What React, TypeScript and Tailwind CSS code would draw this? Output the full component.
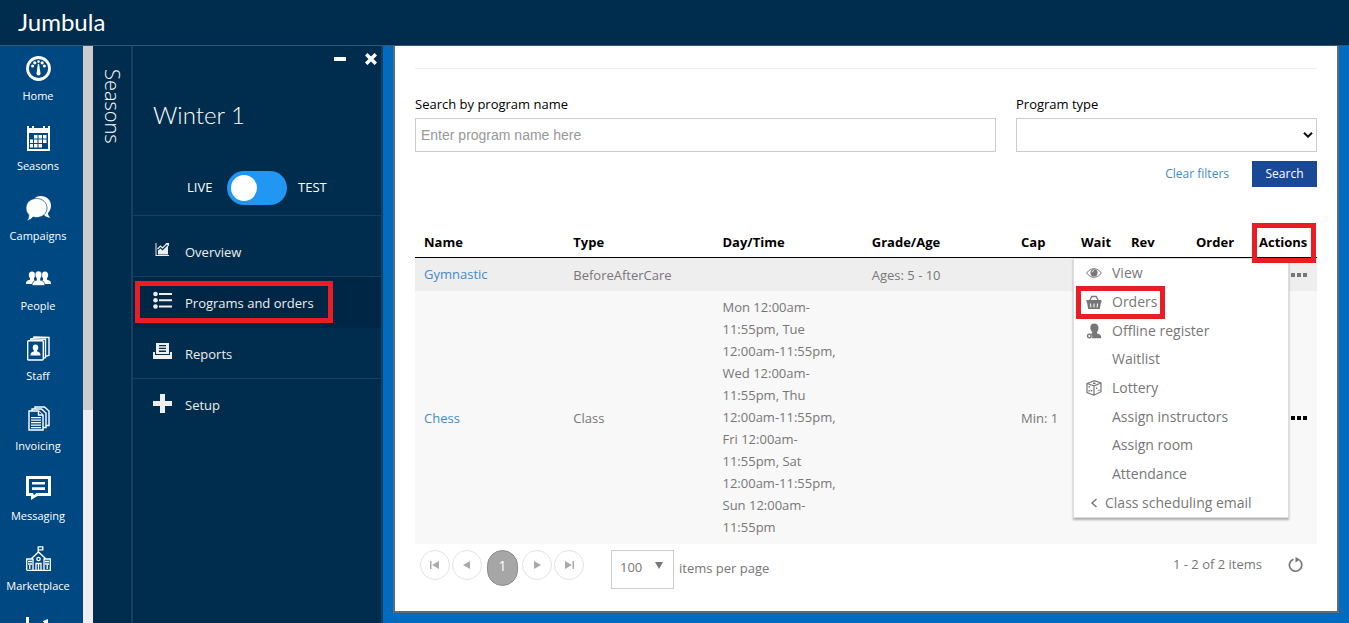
import { useState } from "react";
import type { ReactNode } from "react";

const Svg = ({
  box = "0 0 25 25",
  className = "w-[25px] h-[25px]",
  children,
}: {
  box?: string;
  className?: string;
  children: ReactNode;
}) => (
  <svg viewBox={box} className={className} fill="currentColor" aria-hidden="true">
    {children}
  </svg>
);

const HomeIcon = () => (
  <Svg>
    <circle cx="12.5" cy="12.5" r="11" fill="none" stroke="currentColor" strokeWidth="2.8" />
    <path d="M11.9 8h1.2l1.4 9.5a2 2 0 1 1-4 0z" />
    <circle cx="12.5" cy="5.6" r="1.3" />
    <circle cx="8.8" cy="6.8" r="1.6" />
    <circle cx="16.2" cy="6.8" r="1.6" />
    <circle cx="6.6" cy="10" r="1.5" />
    <circle cx="18.4" cy="10" r="1.5" />
  </Svg>
);

const CalendarIcon = () => (
  <Svg>
    <path
      fillRule="evenodd"
      d="M1 0h2v2h3V0h2v2h9V0h2v2h3V0h2v25H1zM3 7v16h19V7z"
    />
    <path d="M8 9h3.5v3.5H8zM12.5 9H16v3.5h-3.5zM17 9h3.5v3.5H17zM4 13.5h3v3.5H4zM8 13.5h3.5V17H8zM12.5 13.5H16V17h-3.5zM17 13.5h3.5V17H17zM4 18h3v3.5H4zM8 18h3.5v3.5H8zM12.5 18H16v3.5h-3.5z" />
  </Svg>
);

const CampaignsIcon = () => (
  <Svg>
    <path d="M14.5 0C20.5 0 25 4 25 9.5c0 3-1.300 5.500-3 7.500 0 2 1 3.500 2.500 4.500-2.500 0-4.500-.5-6-2L8 3C9.500 1 12 0 14.500 0z" />
    <path
      d="M10.500 2.500C16.500 2.500 21 6.500 21 12s-4.500 9.500-10.500 9.500c-1.300 0-2.500-.2-3.600-.5C5.500 23 3 24.500.8 24.500 2.300 23 3 21 2.800 18.800 1 17 0 14.700 0 12c0-5.500 4.500-9.500 10.500-9.500z"
      stroke="#004881"
      strokeWidth=".7"
    />
  </Svg>
);

const PeopleIcon = () => (
  <Svg>
    <path d="M6 5.500c2 0 3.200 1.300 3.200 3.300 0 1.500-.6 2.600-1.200 3.400v1.600l1 .5c-1.500.8-2.300 2-2.500 3.700H0c0-2.500.6-3.400 4-4.300v-1.500c-.7-.8-1.200-1.900-1.200-3.400 0-2 1.200-3.300 3.200-3.300zM19 5.500c-2 0-3.200 1.300-3.200 3.300 0 1.500.6 2.600 1.200 3.400v1.600l-1 .5c1.500.8 2.300 2 2.500 3.700H25c0-2.500-.6-3.400-4-4.300v-1.500c.7-.8 1.200-1.900 1.200-3.400 0-2-1.200-3.300-3.200-3.300z" />
    <path d="M12.500 5c2 0 3.400 1.400 3.400 3.600 0 1.700-.6 2.900-1.400 3.800v1.900c3.300.9 4.300 2 4.300 5.200H6.200c0-3.200 1-4.300 4.300-5.200v-1.900c-.8-.9-1.400-2.100-1.400-3.800C9.100 6.400 10.500 5 12.500 5z" stroke="#004881" strokeWidth=".6" />
  </Svg>
);

const StaffIcon = () => (
  <Svg>
    <g fill="none" stroke="currentColor" strokeWidth="1.400">
      <rect x="1.700" y="4.700" width="15.600" height="19.300" rx="1" />
      <path d="M4.500 4.500 5 2.700l14.500.5v18.500l-2 .3M7.500 2.500l.5-1.500 15 .5v18l-3 .6" />
    </g>
    <path d="M9.500 8.500c1.800 0 2.800 1.100 2.800 2.900 0 1.200-.5 2.200-1.100 2.900v1.300c2.400.6 3.300 1.400 3.300 3.900h-10c0-2.500.9-3.300 3.300-3.900v-1.300c-.6-.7-1.100-1.700-1.100-2.900 0-1.800 1-2.900 2.800-2.900z" />
  </Svg>
);

const InvoicingIcon = () => (
  <Svg>
    <g fill="#004881" stroke="currentColor" strokeWidth="1.400">
      <path d="M9 1h9.500L23 5v14.500H9z" />
      <path d="M6 3h9.500L20 7v14.500H6z" />
      <path d="M3 5h9.500L17 9v15H3z" />
      <path d="M12.500 5v4H17" />
    </g>
    <path d="M5 11h10v1.300H5zM5 13.500h10v1.300H5zM5 16h10v1.300H5zM5 18.500h10v1.300H5zM5 21h10v1.300H5z" />
  </Svg>
);

const MessagingIcon = () => (
  <Svg>
    <path fillRule="evenodd" d="M0 0h25v20H11.500L5 24v-4H0zM3 3v14h4l1 2.200 2.500-2.200H22V3z" />
    <path d="M6 6h13v2.600H6zM6 11.300h13v2.600H6z" />
  </Svg>
);

const MarketplaceIcon = () => (
  <Svg>
    <g fill="none" stroke="currentColor" strokeWidth="1.300">
      <path d="M12.200 6V.8h4.600v3h-4.600M7 12.500v11.800h11V12.500M5.500 12.500 12.500 6l7 6.500M.7 24.300V13H7M18 13h6.300v11.300H.7M10 24v-6.500h5V24M12.500 17.500V24" />
      <circle cx="12.500" cy="13" r="1.700" />
      <path d="M2 15.500h4M2 18h4M19 15.500h4M19 18h4M3.800 19v4M21.200 19v4" />
    </g>
  </Svg>
);

const ChartIcon = () => (
  <Svg>
    <path d="M0 1h3v21h22v3H0zM6 10h4v10H6zM12 7h4v13h-4zM17 5l5-2v17h-4V6h-1z" />
  </Svg>
);

const sideItems = [
  { label: "Home", icon: <HomeIcon /> },
  { label: "Seasons", icon: <CalendarIcon /> },
  { label: "Campaigns", icon: <CampaignsIcon /> },
  { label: "People", icon: <PeopleIcon /> },
  { label: "Staff", icon: <StaffIcon /> },
  { label: "Invoicing", icon: <InvoicingIcon /> },
  { label: "Messaging", icon: <MessagingIcon /> },
  { label: "Marketplace", icon: <MarketplaceIcon /> },
];

const seasonItems = [
  {
    label: "Overview",
    icon: (
      <Svg box="0 0 19 19" className="w-[19px] h-[19px]">
        <path d="M2.500 3h1v12H16v1H2.500zM5 10.500l2.500-2 2 2L12 8l3-3v9.500H5z" />
        <path d="m4.500 9 3-3 2 2L14 3.500" fill="none" stroke="currentColor" strokeWidth="1.200" />
        <path d="M12.500 3H16v3.500z" />
      </Svg>
    ),
  },
  {
    label: "Programs and orders",
    active: true,
    icon: (
      <Svg box="0 0 19 19" className="w-[19px] h-[19px]">
        <circle cx="2.500" cy="3" r="2.300" />
        <circle cx="2.500" cy="9.200" r="2.300" />
        <circle cx="2.500" cy="15.500" r="2.300" />
        <path d="M6 2h13v2H6zM6 8.200h13v2H6zM6 14.500h13v2H6z" />
      </Svg>
    ),
  },
  {
    label: "Reports",
    icon: (
      <Svg box="0 0 19 19" className="w-[19px] h-[19px]">
        <path fillRule="evenodd" d="M3 1h13v11H3zM6 3v1.300h7V3zM6 5.800v1.300h7V5.800zM6 8.600v1.300h7V8.600z" />
        <path d="M0 10h2v3h15v-3h2v7H0z" />
      </Svg>
    ),
  },
  {
    label: "Setup",
    icon: (
      <Svg box="0 0 19 19" className="w-[19px] h-[19px]">
        <path d="M7 0h5v7h7v5h-7v7H7v-7H0V7h7z" />
      </Svg>
    ),
  },
];

const menuItems: { label: string; icon?: ReactNode; marked?: boolean }[] = [
  {
    label: "View",
    icon: (
      <Svg box="0 0 16 16" className="w-4 h-4">
        <path d="M.7 8C4.500 2.300 11.500 2.300 15.300 8 11.500 13.700 4.500 13.700.7 8z" fill="none" stroke="currentColor" />
        <circle cx="8" cy="7.800" r="3.600" />
        <path d="M6 7.500A2 2 0 0 1 8 5.500" fill="none" stroke="#fff" strokeWidth=".8" />
      </Svg>
    ),
  },
  {
    label: "Orders",
    marked: true,
    icon: (
      <Svg box="0 0 16 16" className="w-4 h-4">
        <path d="m3.500 7 2.300-4.500h4.400L12.500 7" fill="none" stroke="currentColor" strokeWidth="1.400" />
        <path fillRule="evenodd" d="M.5 6h15v2.500H15L13.800 15H2.200L1 8.500H.5zM4 9.500l.4 4h1l-.4-4zM7.500 9.500v4h1v-4zM11 9.500l-.4 4h1l.4-4z" />
      </Svg>
    ),
  },
  {
    label: "Offline register",
    icon: (
      <Svg box="0 0 16 16" className="w-4 h-4">
        <path d="M8.200.5c2.800 0 4.300 1.700 4.300 4.500 0 1.700-.6 3-1.500 4v1.500c3 .6 4.300 1.500 4.300 4.800H5.800l.6-2.300-1.800-2.300 1.600-.4V9c-.9-1-1.900-2.300-1.900-4 0-2.800 1.300-4.500 3.900-4.500z" />
        <circle cx="3.300" cy="13" r="1.800" fill="none" stroke="currentColor" strokeWidth="1.400" />
      </Svg>
    ),
  },
  { label: "Waitlist" },
  {
    label: "Lottery",
    icon: (
      <Svg box="0 0 16 16" className="w-4 h-4">
        <path
          d="M1 3.500 8.500.7 15 3v8.700l-7 3.500-7-2.700zM1 3.500l7 2.300L15 3M8 5.800v9.400"
          fill="none"
          stroke="currentColor"
          strokeWidth="1.200"
        />
        <path d="M7 2.500h2.500V4H7zM2.500 6h1.500v1.500H2.500zM4.800 10h1.500v1.500H4.800zM2.500 10h1.500v1.500H2.500zM10 7.500h1.300V9H10zM12.300 9.500h1.300V11h-1.300z" />
      </Svg>
    ),
  },
  { label: "Assign instructors" },
  { label: "Assign room" },
  { label: "Attendance" },
];

function ActionsMenu() {
  return (
    <ul className="absolute right-[28px] top-0 z-10 grid h-[260px] w-[216px] auto-rows-fr border border-[#ddd] bg-white text-sm text-[#777] shadow-[0_2px_2px_rgba(0,0,0,0.3)]">
      {menuItems.map((item) => (
        <li key={item.label} className="relative flex">
          <button className="flex w-full items-center pl-3 text-left">
            <span className="w-[26px]">{item.icon}</span>
            {item.label}
          </button>
          {item.marked && (
            <span className="pointer-events-none absolute -top-0.5 left-0.5 h-[33px] w-[89px] border-[5px] border-[#ea1d25]" />
          )}
        </li>
      ))}
      <li className="flex">
        <button className="flex w-full items-center pl-4 text-left">
          <span className="w-[15px]">
            <svg viewBox="0 0 8 10" className="h-[10px] w-2" fill="none" stroke="currentColor" strokeWidth="1.500" aria-hidden="true">
              <path d="M6.500 1 2 5l4.500 4" />
            </svg>
          </span>
          Class scheduling email
        </button>
      </li>
    </ul>
  );
}

const Dots = () => (
  <svg viewBox="0 0 16 4" className="block h-1 w-4" fill="currentColor" aria-hidden="true">
    <path d="M0 0h4v4H0zM6 0h4v4H6zM12 0h4v4h-4z" />
  </svg>
);

const columns = ["Name", "Type", "Day/Time", "Grade/Age", "Cap", "Wait", "Rev", "Order"];

const days = ["Mon", "Tue", "Wed", "Thu", "Fri", "Sat", "Sun"];

const PagerButton = ({ label, path }: { label: string; path: string }) => (
  <button
    aria-label={label}
    className="flex h-[30px] w-[30px] items-center justify-center rounded-full border border-[#e3e3e3] text-[#aaa]"
  >
    <svg viewBox="0 0 10 10" className="h-[10px] w-[10px]" fill="currentColor">
      <path d={path} />
    </svg>
  </button>
);

export default function App() {
  const [test, setTest] = useState(false);
  const [name, setName] = useState("");

  return (
    <div className="flex h-screen flex-col overflow-hidden bg-[#006cc1] font-['Open_Sans',sans-serif] text-[13px]">
      {/* Header */}
      <header className="flex h-[46px] shrink-0 items-center border-b border-[#36566f] bg-[#002d4d] pb-0.5 pl-[18px]">
        <h1 className="font-['Lato',sans-serif] text-2xl text-white">Jumbula</h1>
      </header>

      <div className="flex min-h-0 flex-1">
        {/* Main navigation */}
        <nav className="w-[83px] shrink-0 overflow-hidden bg-[#004881] pr-[7px] text-white">
          {sideItems.map((item) => (
            <a key={item.label} href="#" className="flex h-[70px] flex-col items-center pt-[10px] text-[11px]">
              {item.icon}
              <span className="mt-1.5 leading-[18px]">{item.label}</span>
            </a>
          ))}
          <a href="#" aria-label="Reports" className="flex justify-center pt-[10px]">
            <ChartIcon />
          </a>
        </nav>
        <div className="w-[10px] shrink-0 bg-[#eee]">
          <div className="h-[63%] bg-[#ccc]" />
        </div>

        {/* Collapsed seasons tab */}
        <div className="w-10 shrink-0 border-r-2 border-[#173f60] bg-[#002d4d] pl-[5px] pt-[23px]">
          <span className="text-xl font-light text-white [writing-mode:vertical-rl]">Seasons</span>
        </div>

        {/* Season panel */}
        <aside className="w-[250px] shrink-0 border-r-2 border-[#173f60] bg-[#002d4d] text-white">
          <div className="flex h-[26px] items-center justify-end gap-[19px] pr-1">
            <button aria-label="Minimize">
              <svg viewBox="0 0 12 12" className="h-3 w-3" fill="currentColor">
                <path d="M0 4h12v4H0z" />
              </svg>
            </button>
            <button aria-label="Close">
              <svg viewBox="0 0 12 12" className="h-3 w-3" stroke="currentColor" strokeWidth="3.500">
                <path d="m1.200 1.200 9.600 9.600M10.800 1.200l-9.600 9.600" />
              </svg>
            </button>
          </div>
          <h2 className="mt-[27px] pl-5 font-['Lato',sans-serif] text-2xl font-light">Winter 1</h2>
          <label className="mt-10 flex items-center pl-[54px]">
            <span className="w-10">LIVE</span>
            <input
              type="checkbox"
              className="peer sr-only"
              checked={test}
              onChange={(e) => setTest(e.target.checked)}
            />
            <span className="flex h-[34px] w-[60px] rounded-full bg-[#2196f3] p-1 peer-checked:justify-end">
              <span className="h-[26px] w-[26px] rounded-full bg-white" />
            </span>
            <span className="ml-[11px]">TEST</span>
          </label>
          <ul className="mt-[10px] border-t border-[#173f60] pt-[10px]">
            {seasonItems.map((item) => (
              <li
                key={item.label}
                className={
                  item.active
                    ? "relative h-[51px] border-b border-[#002645] bg-[#002645]"
                    : "h-[51px] border-b border-[#173f60] last:border-0"
                }
              >
                <a href="#" className="flex h-full items-center gap-[13px] pl-5 pt-[3px] text-[#eee]">
                  <span className="pb-1.5">{item.icon}</span>
                  {item.label}
                </a>
                {item.active && (
                  <span className="pointer-events-none absolute left-0.5 top-1 h-[42px] w-[198px] border-[5px] border-[#ea1d25]" />
                )}
              </li>
            ))}
          </ul>
        </aside>

        {/* Programs */}
        <main className="mb-[10px] ml-[10px] mr-[10px] min-w-0 flex-1 border-2 border-t-0 border-[#646b70] bg-white px-5 pt-[22px]">
          <form onSubmit={(e) => e.preventDefault()} className="border-t border-[#eee] pt-[25px]">
            <div className="flex gap-5">
              <div className="flex-[581]">
                <label htmlFor="program-name" className="block leading-5">
                  Search by program name
                </label>
                <input
                  id="program-name"
                  value={name}
                  onChange={(e) => setName(e.target.value)}
                  placeholder="Enter program name here"
                  className="mt-1 block h-[34px] w-full border border-[#ccc] px-[5px] font-['Liberation_Sans',sans-serif] text-sm placeholder:text-[#999]"
                />
              </div>
              <div className="flex-[301]">
                <label htmlFor="program-type" className="block leading-5">
                  Program type
                </label>
                <div className="relative mt-1">
                  <select id="program-type" className="block h-[34px] w-full appearance-none border border-[#ccc] bg-white px-2">
                    <option></option>
                    <option>Class</option>
                    <option>BeforeAfterCare</option>
                  </select>
                  <svg
                    viewBox="0 0 10 6"
                    className="pointer-events-none absolute right-1 top-[14px] h-1.5 w-[10px]"
                    fill="none"
                    stroke="#111"
                    strokeWidth="2"
                  >
                    <path d="m1 .7 4 4 4-4" />
                  </svg>
                </div>
              </div>
            </div>
            <div className="mt-[9px] flex items-center justify-end gap-[23px]">
              <button type="button" className="text-xs text-[#428bca]" onClick={() => setName("")}>
                Clear filters
              </button>
              <button className="h-[26px] w-[65px] bg-[#184997] text-xs text-white">Search</button>
            </div>
          </form>

          <table className="mt-[40px] w-full table-fixed text-left leading-[22px] text-[#777]">
            <colgroup>
              <col />
              <col />
              <col />
              <col />
              <col className="w-[60px]" />
              <col className="w-[50px]" />
              <col className="w-[65px]" />
              <col className="w-[63px]" />
              <col className="w-[67px]" />
            </colgroup>
            <thead>
              <tr className="border-b border-black text-black">
                {columns.map((column) => (
                  <th key={column} className="px-[9px] pb-1 pt-1 font-bold">
                    {column}
                  </th>
                ))}
                <th className="relative px-[9px] pb-1 pt-1 font-bold">
                  Actions
                  <span className="pointer-events-none absolute -top-1 right-px z-20 h-10 w-16 border-[5px] border-[#ea1d25]" />
                </th>
              </tr>
            </thead>
            <tbody>
              <tr className="bg-[#eee]">
                <td className="px-[9px] pb-1.5 pt-[5px]">
                  <a href="#" className="text-[#428bca]">Gymnastic</a>
                </td>
                <td className="px-[9px]">BeforeAfterCare</td>
                <td />
                <td className="px-[9px]">Ages: 5 - 10</td>
                <td />
                <td />
                <td />
                <td />
                <td className="relative">
                  <button aria-label="Gymnastic actions" className="ml-[41px] block">
                    <Dots />
                  </button>
                  <ActionsMenu />
                </td>
              </tr>
              <tr className="bg-[#f8f8f8]">
                <td className="px-[9px]">
                  <a href="#" className="text-[#428bca]">Chess</a>
                </td>
                <td className="px-[9px]">Class</td>
                <td className="px-[9px] pb-1.5 pt-[5px]">
                  {days.map((day) => `${day} 12:00am-11:55pm`).join(", ")}
                </td>
                <td />
                <td className="whitespace-nowrap pl-[9px]">Min: 1</td>
                <td />
                <td />
                <td />
                <td>
                  <button aria-label="Chess actions" className="ml-[41px] block text-black">
                    <Dots />
                  </button>
                </td>
              </tr>
            </tbody>
          </table>

          {/* Pager */}
          <div className="flex items-start pl-[5px] pt-1.5 text-[#777]">
            <div className="flex gap-0.5">
              <PagerButton label="First page" path="M0 1h1.500v8H0zM9 1v8L2 5z" />
              <PagerButton label="Previous page" path="M8 1v8L1 5z" />
            </div>
            <button className="ml-[5px] mr-1 h-9 w-[31px] rounded-full border border-[#8c8c8c] bg-[#a6a6a6] pb-1 text-sm text-white">
              1
            </button>
            <div className="flex gap-0.5">
              <PagerButton label="Next page" path="M2 1v8l7-4z" />
              <PagerButton label="Last page" path="M8.500 1H10v8H8.500zM1 1v8l7-4z" />
            </div>
            <div className="relative ml-[27px]">
              <select
                id="page-size"
                aria-label="Items per page"
                className="block h-[39px] w-[63px] appearance-none border border-[#ccc] bg-white pb-1 pl-2"
              >
                <option>100</option>
                <option>50</option>
              </select>
              <svg viewBox="0 0 8 7" className="pointer-events-none absolute right-[11px] top-3 h-[7px] w-2" fill="#777">
                <path d="M0 0h8L4 7z" />
              </svg>
            </div>
            <label htmlFor="page-size" className="ml-[5px] pt-[9px]">
              items per page
            </label>
            <span className="ml-auto pt-[5px]">1 - 2 of 2 items</span>
            <button aria-label="Refresh" className="ml-[26px] mr-[13px] pt-[7px]">
              <svg viewBox="0 0 16 16" className="h-4 w-4" fill="none" stroke="currentColor" strokeWidth="1.700">
                <path d="M10.500 2.200A6.200 6.200 0 1 1 4.500 3.200" transform="matrix(-1 0 0 1 16 0)" />
                <path d="M7.500 0v5.500L12 2.500z" fill="currentColor" stroke="none" />
              </svg>
            </button>
          </div>
        </main>
      </div>
    </div>
  );
}
